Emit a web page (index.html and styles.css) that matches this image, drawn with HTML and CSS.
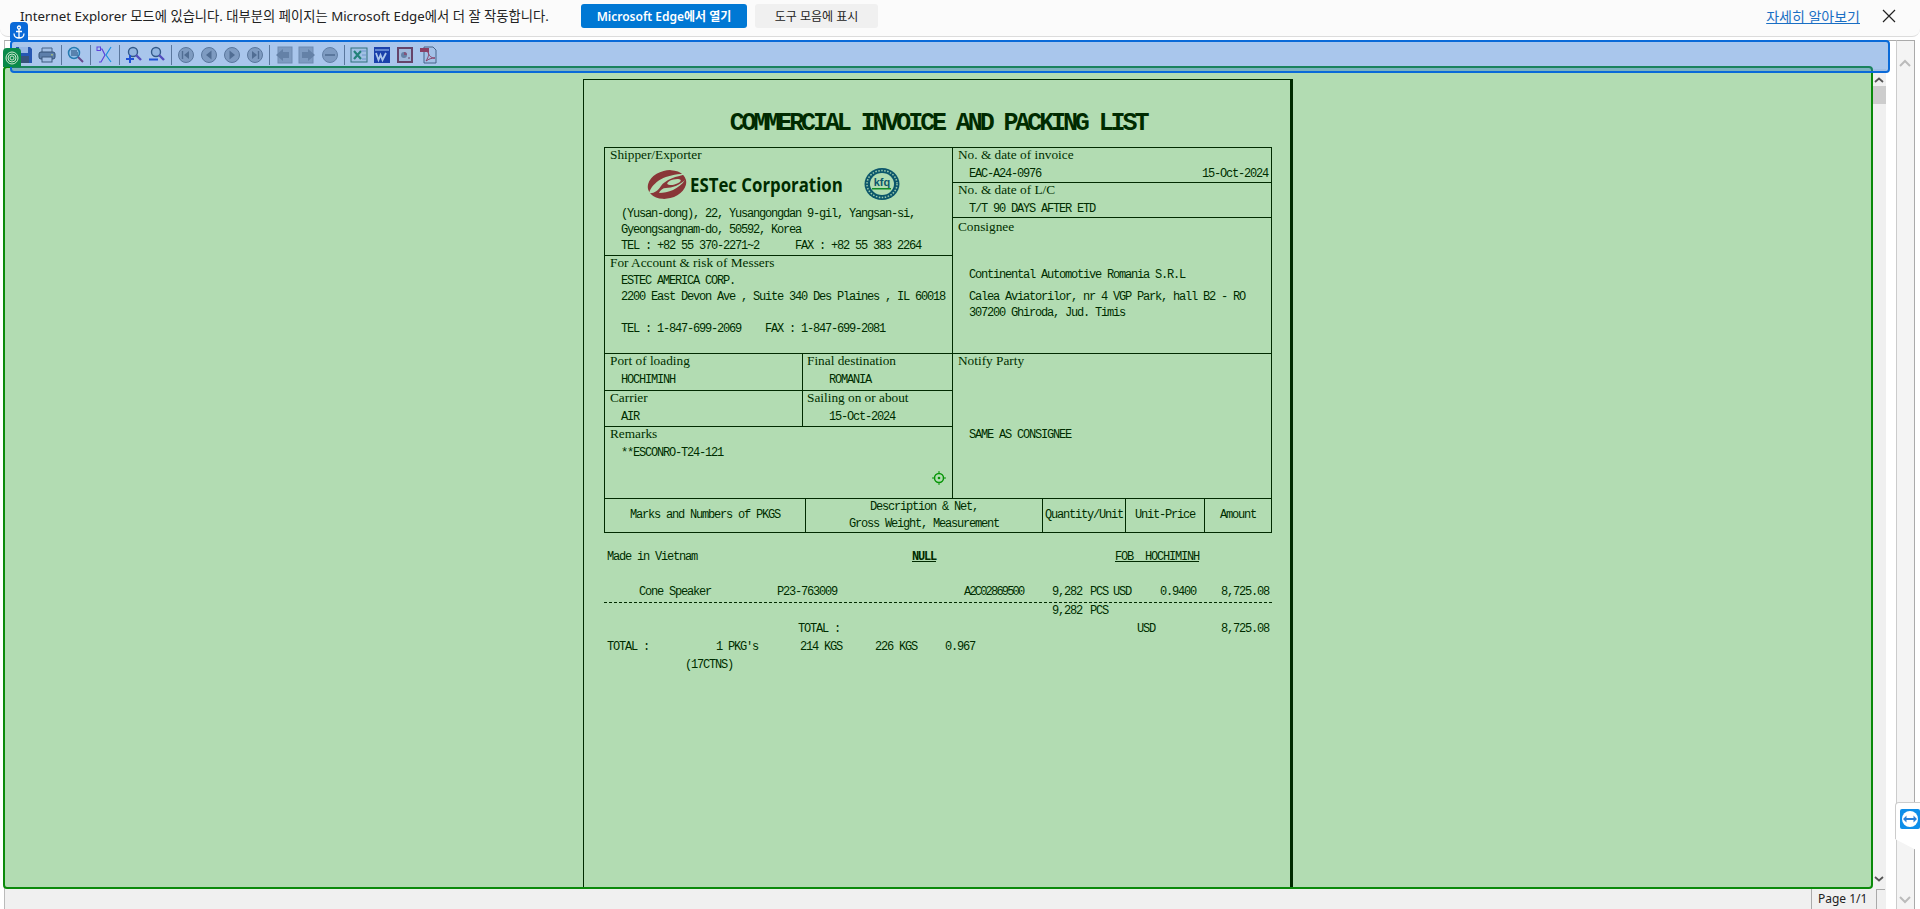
FILE: index.html
```html
<!DOCTYPE html>
<html lang="ko">
<head>
    <meta charset="UTF-8">
    <title>Commercial Invoice and Packing List</title>
    <link rel="stylesheet" href="styles.css">
</head>
<body>
    <div class="infobar">
        <span class="info-text">Internet Explorer 모드에 있습니다. 대부분의 페이지는 Microsoft Edge에서 더 잘 작동합니다.</span>
        <button class="btn btn-primary">Microsoft Edge에서 열기</button>
        <button class="btn btn-plain">도구 모음에 표시</button>
        <a class="info-link" href="#">자세히 알아보기</a>
        <svg class="info-close" width="14" height="14" viewBox="0 0 14 14"><path d="M1 1l12 12M13 1L1 13" stroke="#222" stroke-width="1.2" fill="none"/></svg>
    </div>

    <div class="workspace">
        <div class="frame">
            <div class="toolbar">
                <span class="tool"><svg width="18" height="18" viewBox="0 0 18 18"><path d="M1 1h14l2 2v14H1z" fill="#1c3f9c"/><rect x="4" y="1" width="9" height="6" fill="#dfe6f5"/><rect x="4" y="10" width="10" height="7" fill="#39393f"/></svg></span>
                <span class="tool"><svg width="18" height="18" viewBox="0 0 18 18"><path d="M4 6V2h10v4" fill="#f3f3f3" stroke="#555"/><rect x="1" y="6" width="16" height="7" rx="2" fill="#7d8690" stroke="#333"/><rect x="4" y="11" width="10" height="5" fill="#f3f3f3" stroke="#444"/><rect x="13" y="8" width="2" height="1.5" fill="#e8e24a"/></svg></span>
                <i class="tool-sep"></i>
                <span class="tool"><svg width="18" height="18" viewBox="0 0 18 18"><circle cx="7" cy="7" r="5.5" fill="#d8f2f7" stroke="#1f7f9a" stroke-width="1.5"/><path d="M4 5h6M4 7h7M4 9h7" stroke="#123" stroke-width="1"/><path d="M11 11l5 5" stroke="#8a2a5a" stroke-width="2"/></svg></span>
                <i class="tool-sep"></i>
                <span class="tool"><svg width="18" height="18" viewBox="0 0 18 18" fill="none"><rect x="1" y="1" width="3.500" height="3.500" stroke="#7a1fe0"/><path d="M4.500 3H6l3 6-4 7H3" stroke="#7a1fe0" stroke-width="1.200"/><path d="M15 1l-5 8 5 7" stroke="#0aa0e8" stroke-width="1.200"/></svg></span>
                <i class="tool-sep"></i>
                <span class="tool"><svg width="18" height="18" viewBox="0 0 18 18"><circle cx="8" cy="6" r="4.5" fill="#d8e2ea" stroke="#345" stroke-width="1.400"/><path d="M11 9l5 5" stroke="#6a2fb0" stroke-width="2.400"/><path d="M1 13h8M5 9v8" stroke="#1338d8" stroke-width="2"/></svg></span>
                <span class="tool"><svg width="18" height="18" viewBox="0 0 18 18"><circle cx="8" cy="6" r="4.5" fill="#d8e2ea" stroke="#345" stroke-width="1.400"/><path d="M11 9l5 5" stroke="#6a2fb0" stroke-width="2.400"/><path d="M1 13.500h9" stroke="#1338d8" stroke-width="2"/></svg></span>
                <i class="tool-sep"></i>
                <span class="tool"><svg width="18" height="18" viewBox="0 0 18 18"><circle cx="9" cy="9" r="7.500" fill="#b5b5b5" stroke="#777"/><path d="M12 5v8L7 9z" fill="#666"/><path d="M5.500 5v8" stroke="#666" stroke-width="1.400"/></svg></span>
                <span class="tool"><svg width="18" height="18" viewBox="0 0 18 18"><circle cx="9" cy="9" r="7.500" fill="#b5b5b5" stroke="#777"/><path d="M11.500 4.500v9L6 9z" fill="#666"/></svg></span>
                <span class="tool"><svg width="18" height="18" viewBox="0 0 18 18"><circle cx="9" cy="9" r="7.500" fill="#b5b5b5" stroke="#777"/><path d="M6.500 4.500v9L12 9z" fill="#666"/></svg></span>
                <span class="tool"><svg width="18" height="18" viewBox="0 0 18 18"><circle cx="9" cy="9" r="7.500" fill="#b5b5b5" stroke="#777"/><path d="M6 5v8l5-4z" fill="#666"/><path d="M12.500 5v8" stroke="#666" stroke-width="1.400"/></svg></span>
                <i class="tool-sep"></i>
                <span class="tool"><svg width="18" height="18" viewBox="0 0 18 18"><rect x="3" y="1" width="14" height="16" fill="#b5b5b5" stroke="#999"/><path d="M1 9l7-6v3h6v6H8v3z" fill="#888"/></svg></span>
                <span class="tool"><svg width="18" height="18" viewBox="0 0 18 18"><rect x="1" y="1" width="14" height="16" fill="#b5b5b5" stroke="#999"/><path d="M17 9l-7-6v3H4v6h6v3z" fill="#888"/></svg></span>
                <span class="tool"><svg width="18" height="18" viewBox="0 0 18 18"><circle cx="9" cy="9" r="7.500" fill="#b5b5b5" stroke="#888"/><rect x="4" y="8" width="10" height="2" fill="#777"/></svg></span>
                <i class="tool-sep"></i>
                <span class="tool"><svg width="18" height="18" viewBox="0 0 18 18"><rect x="1" y="2" width="16" height="14" fill="#f0f6f0" stroke="#2f6b3d"/><path d="M4 5l7 8M11 5l-7 8" stroke="#1a8a3a" stroke-width="2.200"/><path d="M11 5h5M12 9h4M12 13h4" stroke="#9ac" stroke-width="1"/></svg></span>
                <span class="tool"><svg width="18" height="18" viewBox="0 0 18 18"><rect x="1" y="1" width="16" height="16" fill="#0a1a90"/><rect x="2" y="3" width="14" height="2" fill="#7f8fd0"/><path d="M3 7l2.500 7 2-5 2 5L13 7" fill="none" stroke="#fff" stroke-width="1.800"/></svg></span>
                <span class="tool"><svg width="18" height="18" viewBox="0 0 18 18"><rect x="1" y="1" width="16" height="16" fill="#8a2020"/><rect x="3" y="3" width="12" height="12" fill="#f0e8e4"/><circle cx="8" cy="9" r="3" fill="#888"/><path d="M8 9V6a3 3 0 0 1 3 3z" fill="#c03a3a"/><path d="M12 12h2" stroke="#8a2020"/></svg></span>
                <span class="tool"><svg width="18" height="18" viewBox="0 0 18 18"><path d="M5 1h9l3 3v13H5z" fill="#f6f6f6" stroke="#555"/><rect x="1" y="2" width="9" height="4" fill="#c81818"/><path d="M7 15c3-5 3-7 2-9 1 4 3 6 7 6-4 0-6 1-9 3z" fill="none" stroke="#c81818"/></svg></span>
            </div>

            <div class="content">
                <div class="docarea">
                    <div class="sheet">
                        <h1 class="title">COMMERCIAL INVOICE AND PACKING LIST</h1>

                        <div class="inv-table">
                            <div class="inv-top">
                                <div class="col-left">
                                    <div class="box box-shipper">
                                        <div class="lab">Shipper/Exporter</div>
                                        <div class="logo-row">
                                            <svg class="swirl" width="42" height="32" viewBox="0 0 42 32">
                                                <ellipse cx="20" cy="16.500" rx="19.500" ry="14" transform="rotate(-14 20 16.500)" fill="#c41250"/>
                                                <path d="M2 25C6 13 20 5 41 6 29 8 18 12 14 18c-3 5-8 8-12 7z" fill="#fff"/>
                                                <ellipse cx="27" cy="14" rx="7" ry="2.500" transform="rotate(-14 27 14)" fill="#fff"/>
                                                <path d="M12 25c9 0 20-4 26-13-5 5-13 8-19 8-3 0-6 2-7 5z" fill="#fff"/>
                                            </svg>
                                            <span class="brand"><span class="brand-text">ESTec Corporation</span></span>
                                            <svg class="kfq" width="38" height="36" viewBox="0 0 38 36">
                                                <ellipse cx="19" cy="18" rx="17.500" ry="16" fill="#12409a"/>
                                                <ellipse cx="19" cy="18" rx="15" ry="13.500" fill="none" stroke="#dfe8f5" stroke-width="1.500" stroke-dasharray="1.500 1.500"/>
                                                <ellipse cx="19" cy="18" rx="12" ry="11" fill="#fff"/>
                                                <text class="kfq-text" x="19" y="20" text-anchor="middle">kfq</text>
                                                <rect x="9" y="22" width="19" height="1.500" fill="#1a8a3a"/>
                                            </svg>
                                        </div>
                                        <div class="val">(Yusan-dong), 22, Yusangongdan 9-gil, Yangsan-si,</div>
                                        <div class="val">Gyeongsangnam-do, 50592, Korea</div>
                                        <div class="val">TEL : +82 55 370-2271~2&nbsp;&nbsp;&nbsp;&nbsp;&nbsp;&nbsp;FAX : +82 55 383 2264</div>
                                    </div>
                                    <div class="box box-account">
                                        <div class="lab">For Account &amp; risk of Messers</div>
                                        <div class="val val-first">ESTEC AMERICA CORP.</div>
                                        <div class="val">2200 East Devon Ave , Suite 340 Des Plaines , IL 60018</div>
                                        <div class="val">&nbsp;</div>
                                        <div class="val">TEL : 1-847-699-2069&nbsp;&nbsp;&nbsp;&nbsp;FAX : 1-847-699-2081</div>
                                    </div>
                                    <div class="box-row row-port">
                                        <div class="box half">
                                            <div class="lab">Port of loading</div>
                                            <div class="val val-tight">HOCHIMINH</div>
                                        </div>
                                        <div class="box half-r">
                                            <div class="lab">Final destination</div>
                                            <div class="val val-tight val-deep">ROMANIA</div>
                                        </div>
                                    </div>
                                    <div class="box-row row-carrier">
                                        <div class="box half">
                                            <div class="lab">Carrier</div>
                                            <div class="val val-tight">AIR</div>
                                        </div>
                                        <div class="box half-r">
                                            <div class="lab">Sailing on or about</div>
                                            <div class="val val-tight val-deep">15-Oct-2024</div>
                                        </div>
                                    </div>
                                    <div class="box box-remarks">
                                        <div class="lab">Remarks</div>
                                        <div class="val val-tight">**ESCONRO-T24-121</div>
                                        <svg class="field-mark" width="14" height="14" viewBox="0 0 14 14" fill="none"><circle cx="7" cy="7" r="4.500" stroke="#0a9a0a" stroke-width="1.500"/><circle cx="7" cy="7" r="1.300" fill="#0a9a0a"/><path d="M7 0v2M7 12v2M0 7h2M12 7h2" stroke="#0a9a0a"/></svg>
                                    </div>
                                </div>
                                <div class="col-right">
                                    <div class="box box-ref">
                                        <div class="lab">No. &amp; date of invoice</div>
                                        <div class="val val-split val-tight"><span>EAC-A24-0976</span><span>15-Oct-2024</span></div>
                                    </div>
                                    <div class="box box-ref">
                                        <div class="lab">No. &amp; date of L/C</div>
                                        <div class="val val-tight">T/T 90 DAYS AFTER ETD</div>
                                    </div>
                                    <div class="box box-consignee">
                                        <div class="lab">Consignee</div>
                                        <div class="val cons-name">Continental Automotive Romania S.R.L</div>
                                        <div class="val cons-addr">Calea Aviatorilor, nr 4 VGP Park, hall B2 - RO</div>
                                        <div class="val">307200 Ghiroda, Jud. Timis</div>
                                    </div>
                                    <div class="box box-notify">
                                        <div class="lab">Notify Party</div>
                                        <div class="val notify-val">SAME AS CONSIGNEE</div>
                                    </div>
                                </div>
                            </div>
                            <div class="inv-heads">
                                <div class="head head-marks">Marks and Numbers of PKGS</div>
                                <div class="head head-desc">Description &amp; Net,<br>Gross Weight, Measurement</div>
                                <div class="head head-qty">Quantity/Unit</div>
                                <div class="head head-price">Unit-Price</div>
                                <div class="head head-amount">Amount</div>
                            </div>
                        </div>

                        <div class="lines">
                            <div class="line line-a">
                                <span class="c0">Made in Vietnam</span>
                                <span class="c8 strong">NULL</span>
                                <span class="c14 under">FOB&nbsp;&nbsp;HOCHIMINH</span>
                            </div>
                            <div class="line line-b">
                                <span class="c1">Cone Speaker</span>
                                <span class="c4">P23-763009</span>
                                <span class="c10 squeeze">A2C02869500</span>
                                <span class="c11">9,282</span>
                                <span class="c12">PCS</span>
                                <span class="c13">USD</span>
                                <span class="c16">0.9400</span>
                                <span class="c17">8,725.08</span>
                            </div>
                            <div class="dash"></div>
                            <div class="line">
                                <span class="c11">9,282</span>
                                <span class="c12">PCS</span>
                            </div>
                            <div class="line line-c">
                                <span class="c5">TOTAL :</span>
                                <span class="c15">USD</span>
                                <span class="c17">8,725.08</span>
                            </div>
                            <div class="line line-d">
                                <span class="c0">TOTAL :</span>
                                <span class="c3">1 PKG's</span>
                                <span class="c6">214 KGS</span>
                                <span class="c7">226 KGS</span>
                                <span class="c9">0.967</span>
                            </div>
                            <div class="line line-e">
                                <span class="c2">(17CTNS)</span>
                            </div>
                        </div>
                    </div>
                </div>
                <div class="vscroll">
                    <svg width="10" height="6" viewBox="0 0 10 6"><path d="M1 5l4-3.500L9 5" fill="none" stroke="#555" stroke-width="1.800"/></svg>
                    <div class="vthumb"></div>
                    <svg class="vdown" width="10" height="6" viewBox="0 0 10 6"><path d="M1 1l4 3.500L9 1" fill="none" stroke="#555" stroke-width="1.800"/></svg>
                </div>
            </div>

            <div class="status">
                <span class="status-page">Page 1/1</span>
                <span class="status-grip"></span>
            </div>
        </div>
        <div class="outer-scroll">
            <svg width="12" height="8" viewBox="0 0 12 8"><path d="M1 7l5-5 5 5" fill="none" stroke="#bbb" stroke-width="2"/></svg>
            <svg width="12" height="8" viewBox="0 0 12 8"><path d="M1 1l5 5 5-5" fill="none" stroke="#bbb" stroke-width="2"/></svg>
        </div>
    </div>

    <!-- capture overlays, these sit on top of the viewer -->
    <div class="zone zone-green"></div>
    <div class="zone zone-blue"></div>
    <div class="tag tag-blue">
        <svg width="12" height="14" viewBox="0 0 12 14" fill="none" stroke="#fff" stroke-width="1.300"><circle cx="6" cy="2.500" r="1.500"/><path d="M6 4v9M3 6.500h6M1 8.500c0 3 2.500 4.500 5 4.500s5-1.500 5-4.500"/></svg>
    </div>
    <div class="tag tag-green">
        <svg width="14" height="14" viewBox="0 0 14 14" fill="none" stroke="#cfe8cf"><circle cx="7" cy="7" r="6"/><circle cx="7" cy="7" r="4"/><circle cx="7" cy="7" r="2"/></svg>
    </div>
    <div class="tv-tab">
        <svg width="20" height="20" viewBox="0 0 20 20"><rect width="20" height="20" rx="2" fill="#0e8ee9"/><circle cx="10" cy="10" r="8" fill="#fff"/><path d="M3 10l3.500-3.500V9h7V6.500L17 10l-3.500 3.500V11h-7v2.500z" fill="#2a7fd8"/></svg>
    </div>
</body>
</html>
```

FILE: styles.css
```css
* {
    box-sizing: border-box;
}

html, body {
    margin: 0;
    height: 909px;
    overflow: hidden;
}

body {
    position: relative;
    display: flex;
    flex-direction: column;
    background-color: #fff;
    font-family: "Open Sans", "Noto Sans CJK KR", sans-serif;
}

/* edge info bar */
.infobar {
    display: flex;
    align-items: center;
    height: 37px;
    padding: 0 24px 5px 20px;
    background-color: #fbfbfb;
    border-bottom: 1px solid #dcdcdc;
    border-radius: 0 0 8px 8px;
    font-family: "Noto Sans", "Noto Sans CJK KR", sans-serif;
    font-size: 13.3px;
    color: #222;
}

.info-text {
    width: 561px;
    white-space: nowrap;
}

.btn {
    height: 24px;
    padding: 0;
    border: none;
    border-radius: 3px;
    font-family: inherit;
    font-size: 12px;
}

.btn-primary {
    width: 166px;
    margin-right: 8px;
    background-color: #0078d4;
    color: #fff;
    font-weight: 600;
}

.btn-plain {
    width: 123px;
    background-color: #f0f0f0;
    color: #222;
}

.info-link {
    margin-left: auto;
    margin-right: 22px;
    color: #1a6fc4;
    font-size: 14px;
}

/* viewer */
.workspace {
    flex: 1;
    display: flex;
    min-height: 0;
    padding: 3px 5px 0 4px;
}

.frame {
    flex: 1;
    display: flex;
    flex-direction: column;
    padding-right: 10px;
    border-top: 1px solid #aaa;
    border-left: 1px solid #bbb;
}

.toolbar {
    display: flex;
    align-items: center;
    flex: none;
    height: 28px;
    padding-left: 7px;
}

.tool {
    display: flex;
    align-items: center;
    justify-content: center;
    width: 23px;
    height: 22px;
}

.tool-sep {
    width: 1px;
    height: 20px;
    margin: 0 2.5px;
    background-color: #777;
}

.content {
    flex: 1;
    display: flex;
    min-height: 0;
}

.docarea {
    flex: 1;
    display: flex;
    justify-content: center;
    padding-top: 10px;
    overflow: hidden;
}

.vscroll {
    display: flex;
    flex-direction: column;
    align-items: center;
    flex: none;
    width: 14px;
    padding-top: 8px;
    background-color: #f0f0f0;
}

.vthumb {
    width: 13px;
    height: 18px;
    margin-top: 3px;
    background-color: #cdcdcd;
}

.vdown {
    margin-top: auto;
    margin-bottom: 7px;
}

.status {
    display: flex;
    align-items: stretch;
    justify-content: flex-end;
    flex: none;
    height: 20px;
    padding-right: 1px;
    background-color: #f0f0f0;
    font-family: "Noto Sans", sans-serif;
    font-size: 12px;
    color: #222;
}

.status-page {
    width: 65px;
    padding-left: 6px;
    line-height: 19px;
    border-left: 1px solid #aaa;
}

.status-grip {
    width: 9px;
    border-left: 1px solid #aaa;
    border-top: 1px solid #aaa;
}

.outer-scroll {
    display: flex;
    flex-direction: column;
    align-items: flex-start;
    justify-content: space-between;
    flex: none;
    width: 19px;
    padding: 18px 0 5px 2px;
    background-color: #f4f4f4;
    border-top: 1px solid #aaa;
    border-left: 1px solid #ccc;
    border-right: 1px solid #aaa;
}

/* the printed sheet */
.sheet {
    flex: none;
    width: 710px;
    height: 820px;
    margin-right: 1px;
    padding-left: 20px;
    border-top: 1px solid #000;
    border-left: 1px solid #000;
    border-right: 3px solid #000;
    color: #000;
}

.title {
    margin: 30px 0 9px;
    width: 668px;
    font-family: "Liberation Mono", monospace;
    font-size: 25px;
    font-weight: bold;
    line-height: 28px;
    letter-spacing: -3.1px;
    text-align: center;
    white-space: nowrap;
}

.inv-table {
    width: 668px;
    border: 1px solid #000;
}

.inv-top {
    display: flex;
    height: 351px;
    border-bottom: 1px solid #000;
}

.col-left {
    display: flex;
    flex-direction: column;
    flex: none;
    width: 348px;
    border-right: 1px solid #000;
}

.col-right {
    flex: 1;
    display: flex;
    flex-direction: column;
}

.box {
    position: relative;
}

.box-row {
    display: flex;
    flex: none;
    border-bottom: 1px solid #000;
}

.box-shipper {
    flex: none;
    height: 108px;
    border-bottom: 1px solid #000;
}

.box-account {
    flex: none;
    height: 98px;
    border-bottom: 1px solid #000;
}

.row-port {
    height: 37px;
}

.row-carrier {
    height: 36px;
}

.box-remarks {
    flex: 1;
}

.half {
    width: 198px;
    border-right: 1px solid #000;
}

.half-r {
    flex: 1;
}

.half-r .lab {
    padding-left: 4px;
}

.box-ref {
    flex: none;
    height: 35px;
    border-bottom: 1px solid #000;
}

.box-consignee {
    flex: none;
    height: 136px;
    border-bottom: 1px solid #000;
}

.box-consignee .lab {
    margin-top: 2px;
}

.box-notify {
    flex: 1;
}

.lab {
    height: 14px;
    margin-top: 0;
    padding-left: 5px;
    font-family: "Liberation Serif", serif;
    font-size: 13.3px;
    line-height: 14px;
    white-space: nowrap;
}

.val {
    height: 16px;
    padding-left: 16px;
    font-family: "Liberation Mono", monospace;
    font-size: 12px;
    line-height: 16px;
    letter-spacing: -1.2px;
    white-space: nowrap;
}

.val-first {
    margin-top: 3px;
}

.val-tight {
    margin-top: 4px;
}

.val-deep {
    padding-left: 26px;
}

.val-split {
    display: flex;
    justify-content: space-between;
    padding-right: 3px;
}

.cons-name {
    margin-top: 33px;
}

.cons-addr {
    margin-top: 6px;
}

.notify-val {
    margin-top: 59px;
}

.logo-row {
    display: flex;
    align-items: center;
    height: 44px;
    padding-left: 42px;
}

.brand {
    flex: none;
    width: 173px;
    margin-left: 1px;
    white-space: nowrap;
}

.brand-text {
    display: inline-block;
    font-family: "Open Sans", sans-serif;
    font-size: 20px;
    font-weight: bold;
    transform: scaleX(0.84);
    transform-origin: left center;
}

.kfq {
    flex: none;
}

.kfq-text {
    font-family: "Liberation Sans", sans-serif;
    font-size: 11px;
    font-weight: bold;
    fill: #12409a;
}

.field-mark {
    position: absolute;
    right: 6px;
    bottom: 13px;
}

.inv-heads {
    display: flex;
    height: 33px;
    font-family: "Liberation Mono", monospace;
    font-size: 12px;
    line-height: 17px;
    letter-spacing: -1.2px;
    text-align: center;
}

.head {
    display: flex;
    align-items: center;
    justify-content: center;
    border-right: 1px solid #000;
    white-space: nowrap;
}

.head-marks {
    width: 201px;
}

.head-desc {
    width: 237px;
}

.head-qty {
    width: 83px;
}

.head-price {
    width: 79px;
}

.head-amount {
    flex: 1;
    border-right: none;
}

/* report lines under the table */
.lines {
    margin-top: 17px;
    font-family: "Liberation Mono", monospace;
    font-size: 12px;
    letter-spacing: -1.2px;
}

.line {
    display: grid;
    grid-template-columns: 3px 32px 46px 31px 61px 21px 2px 75px 37px 33px 19px 88px 38px 23px 2px 22px 23px 61px 50px;
    height: 14px;
    line-height: 14px;
    white-space: nowrap;
}

.line-b {
    margin-top: 21px;
}

.line-c {
    margin-top: 4px;
}

.line-d {
    margin-top: 4px;
}

.line-e {
    margin-top: 4px;
}

.dash {
    height: 5px;
    border-bottom: 1px dashed #000;
    width: 668px;
    transform: translateY(-1px);
}

.c0 { grid-column: 2; }
.c1 { grid-column: 3; }
.c2 { grid-column: 4; }
.c3 { grid-column: 5; }
.c4 { grid-column: 6; }
.c5 { grid-column: 7; }
.c6 { grid-column: 8; }
.c7 { grid-column: 9; }
.c8 { grid-column: 10; }
.c9 { grid-column: 11; }
.c10 { grid-column: 12; }
.c11 { grid-column: 13; }
.c12 { grid-column: 14; }
.c13 { grid-column: 15; }
.c14 { grid-column: 16; }
.c15 { grid-column: 17; }
.c16 { grid-column: 18; }
.c17 { grid-column: 19; }

.strong {
    font-weight: bold;
    text-decoration: underline;
}

.under {
    text-decoration: underline;
}

.squeeze {
    letter-spacing: -1.8px;
}

/* overlays */
.zone {
    position: absolute;
    border-radius: 4px;
}

.zone-green {
    left: 3px;
    top: 66px;
    width: 1870px;
    height: 823px;
    background-color: rgba(0, 140, 0, 0.3);
    border: 2px solid #0a8a0a;
}

.zone-blue {
    left: 10px;
    top: 40px;
    width: 1880px;
    height: 33px;
    background-color: rgba(50, 120, 210, 0.42);
    border: 2px solid #0a6ad8;
}

.tag {
    position: absolute;
    display: flex;
    align-items: center;
    justify-content: center;
    width: 18px;
    height: 19px;
    border-radius: 4px 4px 0 0;
}

.tag-blue {
    left: 10px;
    top: 22px;
    background-color: #0a6ad8;
}

.tag-green {
    left: 3px;
    top: 48px;
    background-color: #0a8a4a;
}

.tv-tab {
    position: absolute;
    right: 0;
    top: 802px;
    width: 25px;
    height: 50px;
    padding: 6px 0 0 4px;
    background-color: #fff;
    border-left: 1px solid #ccc;
    border-top: 1px solid #ccc;
    border-radius: 4px 0 0 0;
    clip-path: polygon(0 0, 100% 0, 100% 100%, 0 74%);
}
```
